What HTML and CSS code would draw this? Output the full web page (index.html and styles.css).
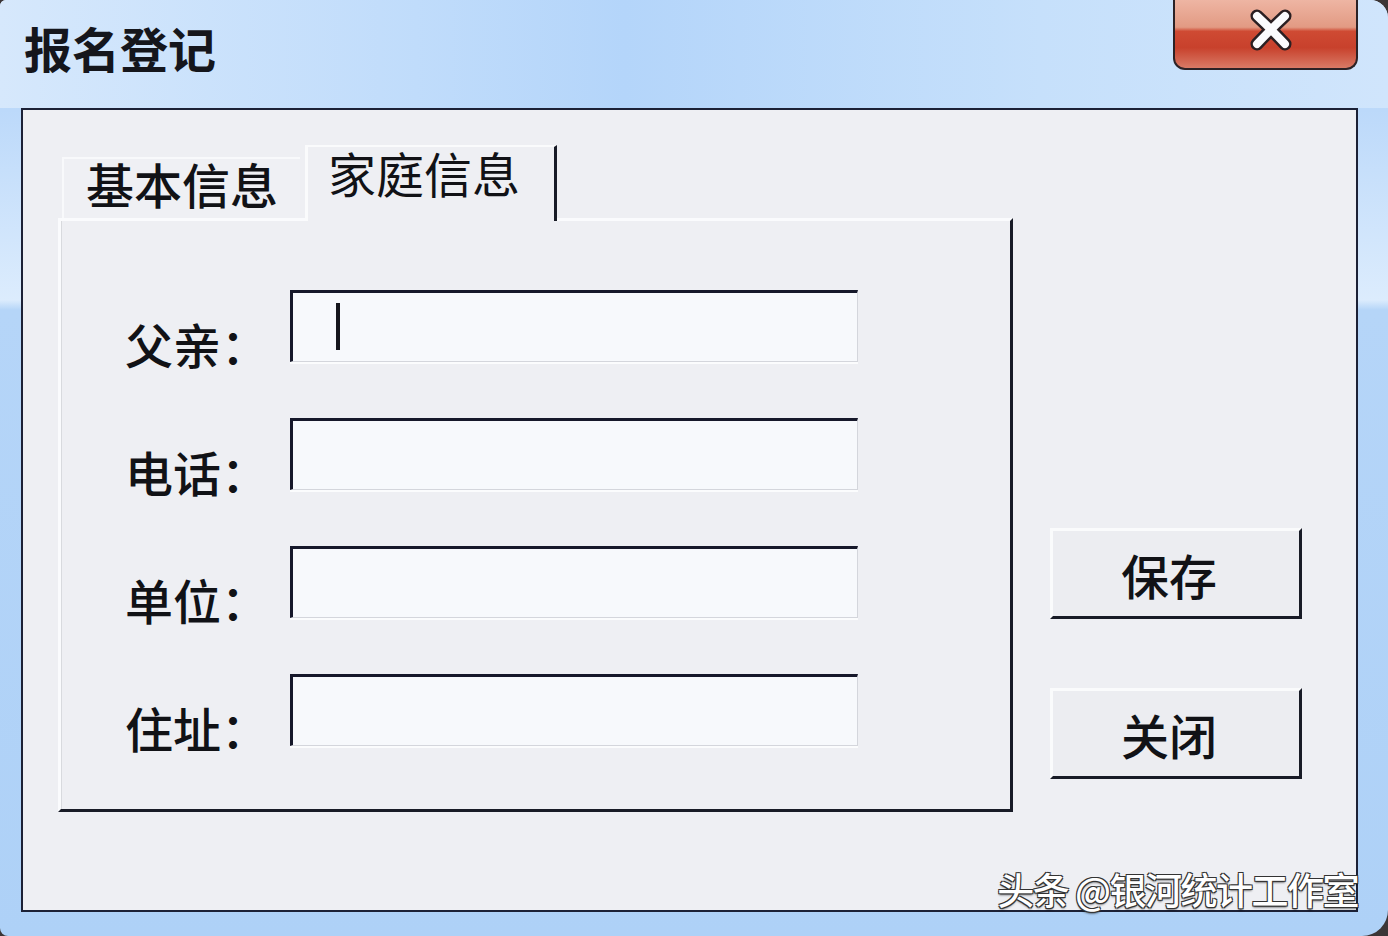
FILE: index.html
```html
<!DOCTYPE html>
<html lang="zh-CN">
<head>
<meta charset="utf-8">
<title>报名登记</title>
<link rel="stylesheet" href="styles.css">
</head>
<body>
<div class="window">
  <div class="titlebar">
    <div class="title">报名登记</div>
    <div class="close-btn">
      <svg class="close-x" width="56" height="46" viewBox="0 0 56 46">
        <path d="M14 9 Q28 22 42 37 M42 9 Q28 22 14 37" fill="none" stroke="#2a1f22" stroke-width="13" stroke-linecap="round"/>
        <path d="M14 9 Q28 22 42 37 M42 9 Q28 22 14 37" fill="none" stroke="#fbfbfd" stroke-width="8" stroke-linecap="round"/>
      </svg>
    </div>
  </div>
  <div class="client">
    <div class="tabctl">
      <div class="tabs">
        <div class="tab">基本信息</div>
        <div class="tab active">家庭信息</div>
      </div>
      <div class="pane">
        <div class="form">
          <div class="label">父亲：</div>
          <div class="field"><span class="caret"></span></div>
          <div class="label">电话：</div>
          <div class="field"></div>
          <div class="label">单位：</div>
          <div class="field"></div>
          <div class="label">住址：</div>
          <div class="field"></div>
        </div>
      </div>
    </div>
    <div class="actions">
      <div class="btn">保存</div>
      <div class="btn">关闭</div>
    </div>
    <div class="watermark">头条 @银河统计工作室</div>
  </div>
</div>
</body>
</html>
```

FILE: styles.css
```css
html, body {
  margin: 0;
  padding: 0;
}
body {
  background: #3b3536;
  width: 1388px;
  height: 936px;
  overflow: hidden;
  font-family: "Noto Sans CJK SC", "Noto Sans", sans-serif;
  color: #111216;
}
.window {
  width: 1388px;
  height: 936px;
  box-sizing: border-box;
  border-radius: 6px 18px 26px 8px;
  background: linear-gradient(180deg, #d4e6fb 0px, #bcd9fa 110px, #dcecfd 300px, #b5d5f8 310px, #aed1f7 936px);
  display: flex;
  flex-direction: column;
  overflow: hidden;
}
.titlebar {
  height: 108px;
  display: flex;
  justify-content: space-between;
  align-items: flex-start;
  background: linear-gradient(90deg, #d6e8fc 0%, #c0dcfb 30%, #b4d5fa 45%, #c6e0fb 75%, #d0e5fc 100%);
}
.title {
  margin: 17px 0 0 24px;
  font-size: 48px;
  line-height: 60px;
  font-weight: 700;
  color: #15161c;
}
.close-btn {
  width: 185px;
  height: 70px;
  margin-right: 30px;
  box-sizing: border-box;
  border: 2px solid #2c2226;
  border-top: none;
  border-radius: 0 0 12px 12px;
  background: linear-gradient(180deg, #eeb5a3 0%, #e29a83 40%, #cf4a33 46%, #c8412c 70%, #d97a66 100%);
  display: flex;
  justify-content: center;
  align-items: center;
}
.close-x {
  display: block;
  margin-top: -8px;
  margin-left: 10px;
}
.client {
  flex: 1;
  margin: 0 30px 24px 21px;
  border: 2px solid #1c2136;
  background: #eeeff3;
  display: flex;
  align-items: flex-start;
  position: relative;
}
.tabctl {
  margin: 35px 0 0 35px;
  width: 955px;
  display: flex;
  flex-direction: column;
}
.tabs {
  display: flex;
  align-items: flex-end;
  padding-left: 4px;
  gap: 5px;
  height: 73px;
}
.tab {
  font-size: 48px;
  line-height: 48px;
  font-weight: 500;
  height: 61px;
  box-sizing: border-box;
  padding: 0 0 0 22px;
  width: 238px;
  background: #eff0f4;
  border-top: 2px solid #f8f9fb;
  border-left: 2px solid #f8f9fb;
  white-space: nowrap;
}
.tab.active {
  width: 252px;
  height: 76px;
  padding-top: 1px;
  padding-left: 20px;
  margin-bottom: -3px;
  font-weight: 400;
  background: #eeeff3;
  border-top: 2px solid #fafbfc;
  border-left: 3px solid #fafbfc;
  border-right: 3px solid #181b26;
  position: relative;
  z-index: 1;
}
.pane {
  height: 594px;
  box-sizing: border-box;
  border-top: 3px solid #fafbfd;
  border-left: 3px solid #fafbfd;
  border-right: 3px solid #181b26;
  border-bottom: 3px solid #181b26;
  box-shadow: inset 1px 0 0 #d8dade;
  padding: 69px 0 0 64px;
}
.form {
  display: grid;
  grid-template-columns: 165px 568px;
  grid-auto-rows: 72px;
  row-gap: 56px;
  align-items: end;
}
.label {
  font-size: 48px;
  line-height: 48px;
  font-weight: 500;
  margin-bottom: -5px;
  white-space: nowrap;
}
.field {
  height: 72px;
  box-sizing: border-box;
  background: #f7f9fc;
  border-top: 3px solid #16182a;
  border-left: 3px solid #16182a;
  border-right: 1px solid #d4d6dc;
  border-bottom: 1px solid #d4d6dc;
  box-shadow: 0 2px 0 #fbfcfd;
  padding: 10px 0 0 43px;
}
.caret {
  display: block;
  width: 4px;
  height: 47px;
  background: #15161c;
}
.actions {
  margin: 418px 0 0 37px;
  display: flex;
  flex-direction: column;
  gap: 69px;
}
.btn {
  width: 252px;
  height: 91px;
  box-sizing: border-box;
  border-top: 3px solid #fafbfc;
  border-left: 3px solid #fafbfc;
  border-right: 3px solid #181b26;
  border-bottom: 3px solid #181b26;
  background: #ecedf1;
  font-size: 48px;
  font-weight: 500;
  display: flex;
  justify-content: center;
  align-items: center;
  padding: 0 14px 0 0;
}
.watermark {
  position: absolute;
  right: -2px;
  bottom: -2px;
  font-size: 37px;
  line-height: 46px;
  font-weight: 500;
  color: #ffffff;
  white-space: nowrap;
  letter-spacing: -1.5px;
  text-shadow: 1px 1px 0 #333, -1px -1px 0 #333, 1px -1px 0 #333, -1px 1px 0 #333, 0 2px 2px rgba(0,0,0,.5);
}
```
